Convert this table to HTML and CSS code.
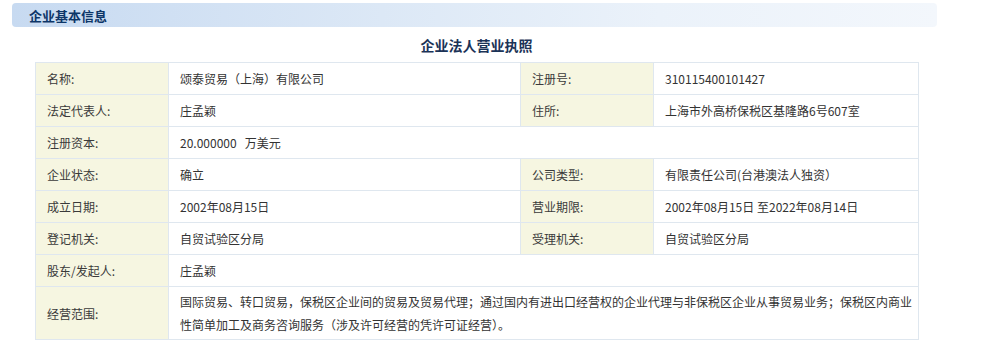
FILE: index.html
```html
<!DOCTYPE html>
<html lang="zh-CN">
<head>
<meta charset="utf-8">
<title>企业基本信息</title>
<link rel="stylesheet" href="styles.css">
</head>
<body>
<div class="page">
  <div class="section-bar"><span class="section-title">企业基本信息</span></div>
  <div class="content">
    <h2 class="doc-title">企业法人营业执照</h2>
    <table class="info">
      <colgroup>
        <col class="c-label"><col class="c-value1"><col class="c-label"><col class="c-value2">
      </colgroup>
      <tbody>
        <tr><th>名称:</th><td>颂泰贸易（上海）有限公司</td><th>注册号:</th><td>310115400101427</td></tr>
        <tr><th>法定代表人:</th><td>庄孟颖</td><th>住所:</th><td>上海市外高桥保税区基隆路6号607室</td></tr>
        <tr><th>注册资本:</th><td colspan="3"><span class="num">20.000000</span><span class="unit">万美元</span></td></tr>
        <tr><th>企业状态:</th><td>确立</td><th>公司类型:</th><td>有限责任公司(台港澳法人独资）</td></tr>
        <tr><th>成立日期:</th><td>2002年08月15日</td><th>营业期限:</th><td>2002年08月15日&nbsp;至2022年08月14日</td></tr>
        <tr><th>登记机关:</th><td>自贸试验区分局</td><th>受理机关:</th><td>自贸试验区分局</td></tr>
        <tr><th>股东/发起人:</th><td colspan="3">庄孟颖</td></tr>
        <tr class="tall"><th>经营范围:</th><td colspan="3">国际贸易、转口贸易，保税区企业间的贸易及贸易代理；通过国内有进出口经营权的企业代理与非保税区企业从事贸易业务；保税区内商业性简单加工及商务咨询服务（涉及许可经营的凭许可证经营）。</td></tr>
      </tbody>
    </table>
  </div>
</div>
</body>
</html>
```
FILE: styles.css
```css
* { box-sizing: border-box; }
html, body { margin: 0; padding: 0; background: #ffffff; }
body {
  font-family: "Noto Sans CJK SC", "Noto Sans", sans-serif;
  font-size: 12px;
  color: #333333;
}
.page { padding-top: 3px; }
.section-bar {
  margin-left: 12px;
  width: 925px;
  height: 24px;
  border-radius: 4px;
  background: linear-gradient(to right, #c7daf1 0%, #dce8f6 40%, #ebf2fa 70%, #f3f7fc 100%);
  display: flex;
  align-items: center;
  padding-left: 17px;
}
.section-title {
  font-size: 13px;
  font-weight: bold;
  color: #0d3668;
  line-height: 1;
}
.content {
  margin-left: 35px;
  width: 883px;
}
.doc-title {
  margin: 0;
  height: 35px;
  display: flex;
  align-items: center;
  justify-content: center;
  font-size: 14px;
  font-weight: bold;
  color: #1b3357;
  line-height: 1;
}
.info {
  width: 883px;
  border-collapse: collapse;
  table-layout: fixed;
}
.c-label { width: 133px; }
.c-value1 { width: 352px; }
.c-value2 { width: 265px; }
.info th, .info td {
  border: 1px solid #dfe7ef;
  height: 32px;
  padding: 0 4px 0 11px;
  text-align: left;
  vertical-align: middle;
  font-weight: normal;
  line-height: 23px;
}
.info th {
  background: #f6f6e1;
  color: #3a3a3a;
}
.info td { color: #333333; }
.info .tall th, .info .tall td {
  height: 53px;
}
.unit { margin-left: 8px; }
```
